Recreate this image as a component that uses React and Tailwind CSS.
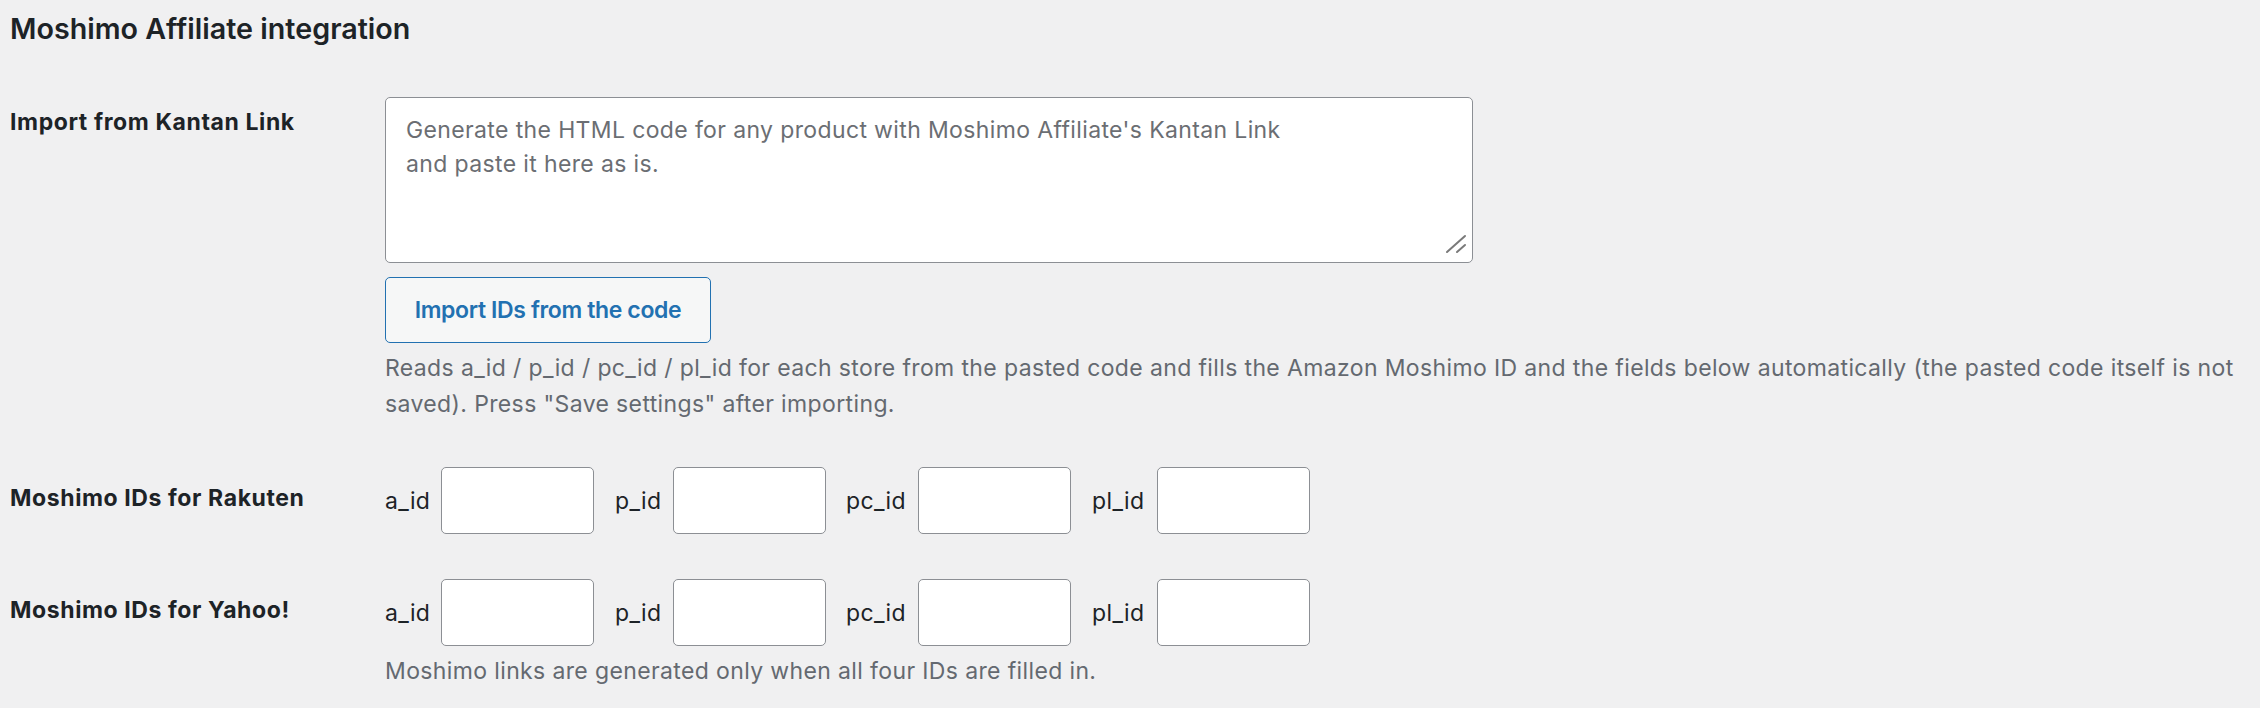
import React from 'react';

// label cell widths measured from the reference so the inputs line up
const idFields = [
  { id: 'a_id', labelW: 'w-[56px]', gap: 'mr-[21px]' },
  { id: 'p_id', labelW: 'w-[58px]', gap: 'mr-[20px]' },
  { id: 'pc_id', labelW: 'w-[72px]', gap: 'mr-[21px]' },
  { id: 'pl_id', labelW: 'w-[65px]', gap: '' },
];

function IdFields({ store }) {
  return (
    <div className="flex items-center">
      {idFields.map(f => (
        <label key={f.id} className={`flex items-center ${f.gap}`}>
          <span className={f.labelW}>{f.id}</span>
          <input
            type="text"
            name={`moshimo_${store}_${f.id}`}
            className="w-[153px] h-[67px] bg-white border border-[#8c8f94] rounded-[5px] px-[12px] outline-none"
          />
        </label>
      ))}
    </div>
  );
}

export default function App() {
  return (
    <div className="min-h-screen bg-[#f0f0f1] font-['Inter',sans-serif] text-[23px] leading-[34px] tracking-[0.37px] text-[#1d2327] pl-[10px] pr-[12px]">
      <h2 className="pt-[9px] text-[28.7px] leading-[40px] tracking-normal font-semibold">Moshimo Affiliate integration</h2>

      {/* Kantan Link import */}
      <div className="mt-[48px] flex">
        <div className="w-[375px] shrink-0 pt-[8px] font-bold tracking-[0.6px]">Import from Kantan Link</div>
        <div className="flex-1">
          <div className="relative w-[1088px]">
            <textarea
              className="block w-full h-[166px] resize-none bg-white border border-[#8c8f94] rounded-[5px] pt-[15px] pl-[20px] pr-[20px] leading-[34px] outline-none placeholder:text-[#6b6e73]"
              placeholder={"Generate the HTML code for any product with Moshimo Affiliate's Kantan Link\nand paste it here as is."}
            />
            <svg className="absolute right-[6px] bottom-[9px] pointer-events-none" width="22" height="20" viewBox="0 0 22 20">
              <path d="M2 18 L20 2 M12 18 L20 11" stroke="#7a7a7a" strokeWidth="2" strokeLinecap="round" fill="none" />
            </svg>
          </div>
          <button
            type="button"
            className="mt-[14px] w-[326px] h-[66px] bg-[#f6f7f7] border border-[#2271b1] rounded-[5px] text-[#2271b1] font-semibold tracking-[-0.37px]"
          >
            Import IDs from the code
          </button>
          <p className="mt-[7px] leading-[36px] text-[#646970]">
            Reads a_id / p_id / pc_id / pl_id for each store from the pasted code and fills the Amazon Moshimo ID and the fields below automatically (the pasted code itself is not saved). Press "Save settings" after importing.
          </p>
        </div>
      </div>

      {/* Rakuten */}
      <div className="mt-[45px] flex items-start">
        <div className="w-[375px] shrink-0 pt-[14px] font-bold tracking-[0.6px]">Moshimo IDs for Rakuten</div>
        <IdFields store="rakuten" />
      </div>

      {/* Yahoo */}
      <div className="mt-[45px] flex items-start">
        <div className="w-[375px] shrink-0 pt-[14px] font-bold tracking-[0.6px]">Moshimo IDs for Yahoo!</div>
        <div>
          <IdFields store="yahoo" />
          <p className="mt-[8px] text-[#646970]">Moshimo links are generated only when all four IDs are filled in.</p>
        </div>
      </div>
    </div>
  );
}
